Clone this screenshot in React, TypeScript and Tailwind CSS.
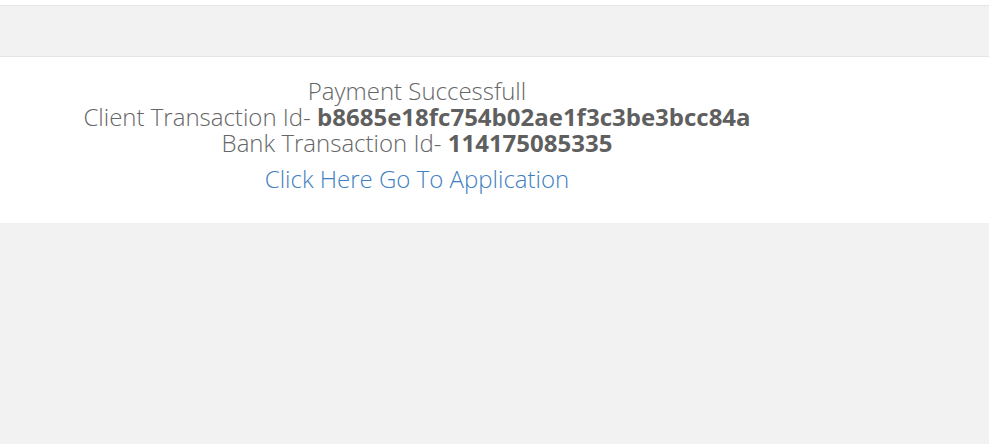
export default function App() {
  return (
    <div className="min-h-[444px] bg-[#f2f2f2]" style={{ fontFamily: '"Open Sans", sans-serif' }}>
      <div className="h-[5px] bg-white" />
      <div className="h-[52px] border-y border-[#e5e5e5] bg-[#f2f2f2]" />
      <div className="bg-white h-[166px]">
        <div className="w-[834px] pt-[21px] text-center text-[24px] leading-[26px] font-light text-[#666]">
          <div>Payment Successfull</div>
          <div>
            Client Transaction Id- <b className="font-bold text-[#5f5f5f]">b8685e18fc754b02ae1f3c3be3bcc84a</b>
          </div>
          <div>
            Bank Transaction Id- <b className="font-bold text-[#5f5f5f]">114175085335</b>
          </div>
          <a href="#" className="mt-[10px] inline-block text-[#3f7fbf]">
            Click Here Go To Application
          </a>
        </div>
      </div>
    </div>
  );
}
